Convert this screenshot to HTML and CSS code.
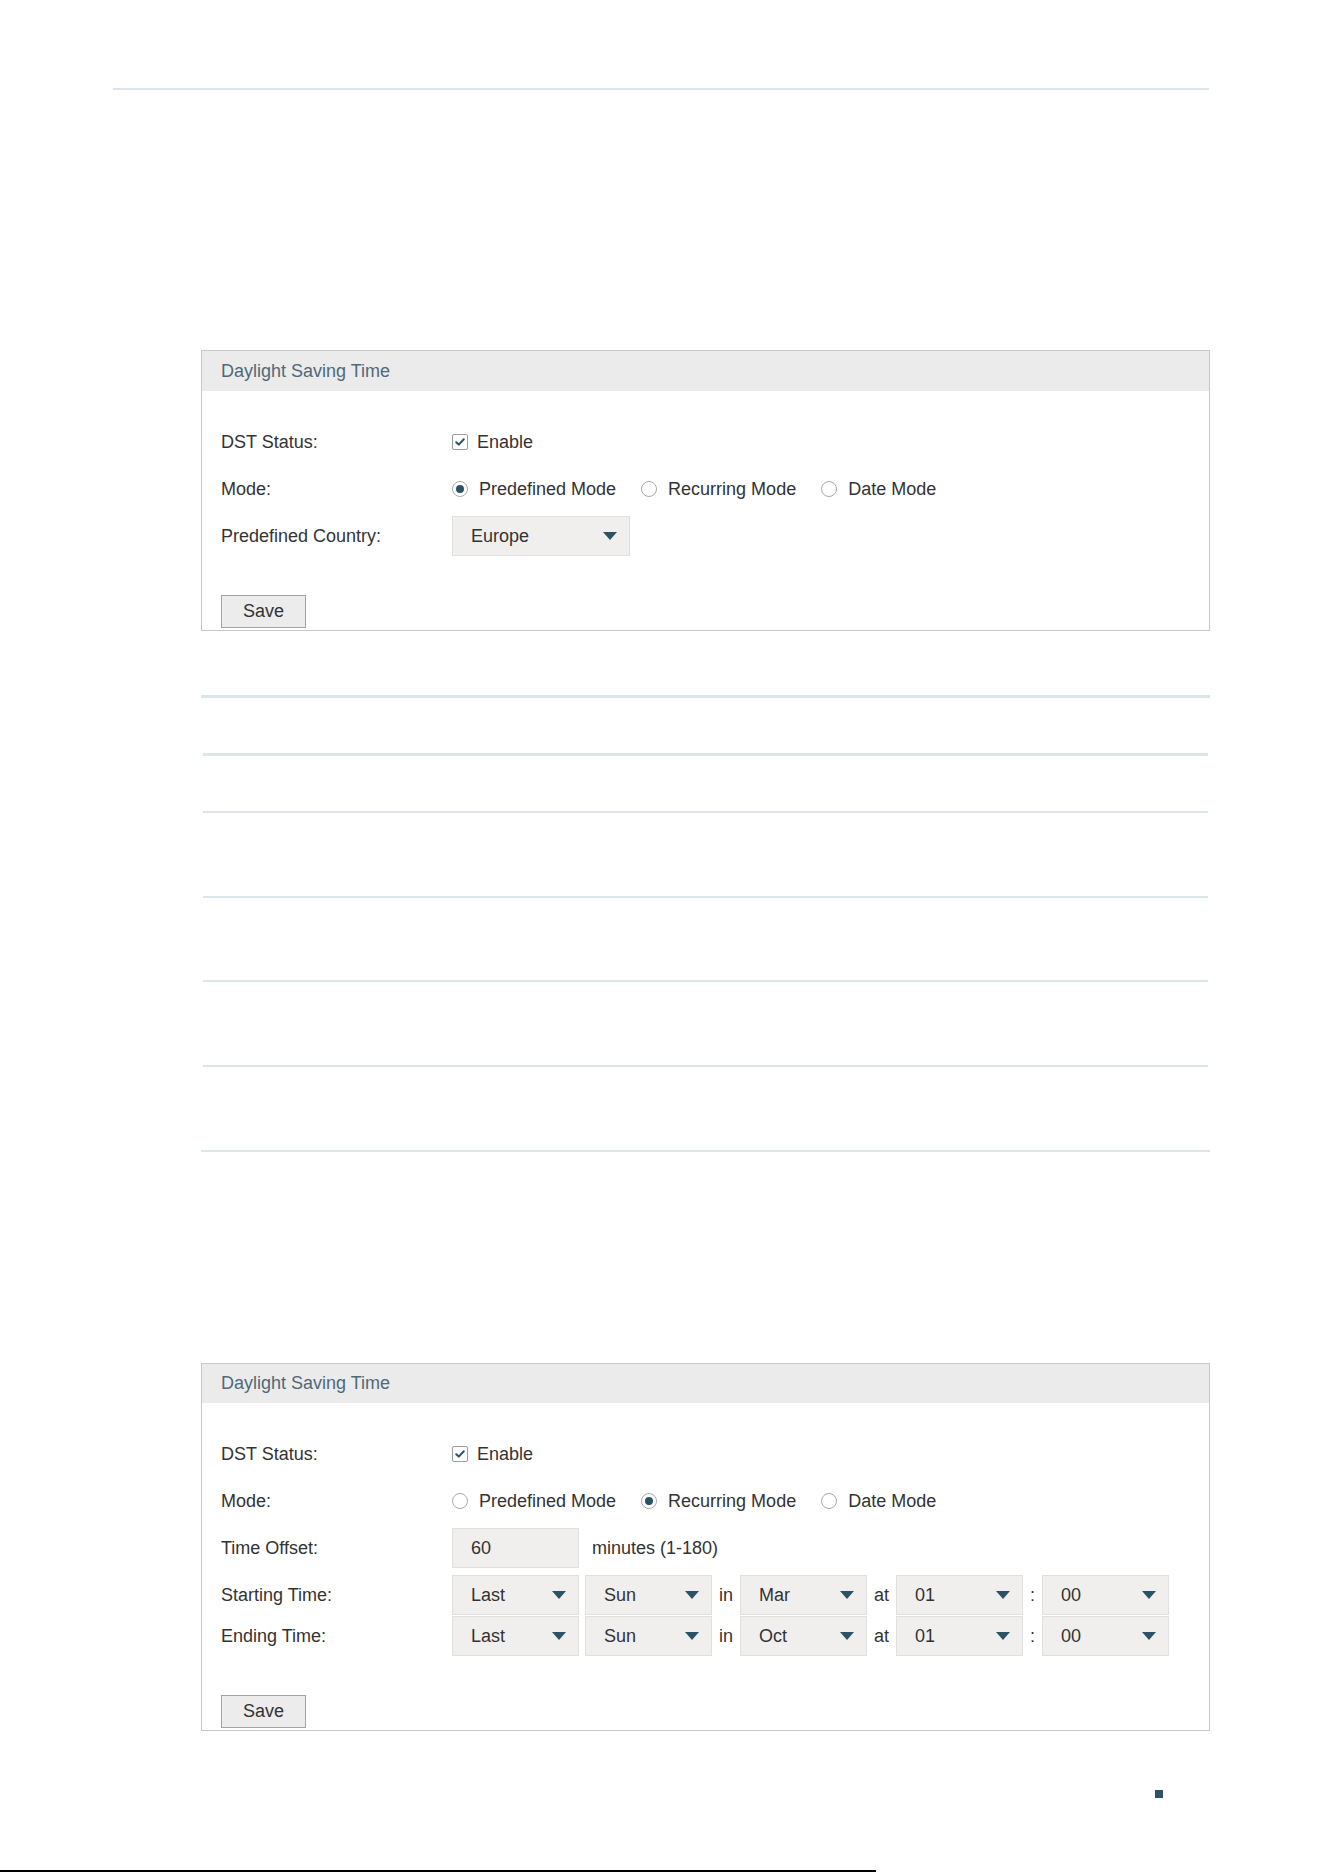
FILE: index.html
```html
<!DOCTYPE html>
<html lang="en">
<head>
  <meta charset="UTF-8">
  <meta name="viewport" content="width=device-width, initial-scale=1.0">
  <title>Daylight Saving Time</title>
  <link rel="stylesheet" href="styles.css">
</head>
<body>
  <div class="page">
    <!-- Top rule of the page -->
    <div class="top-rule"></div>

    <!-- DST panel, predefined mode -->
    <section class="panel">
      <div class="panel-head">Daylight Saving Time</div>
      <div class="panel-body">
        <div class="form-row">
          <span class="label">DST Status:</span>
          <div class="controls">
            <label class="check">
              <span class="box"><svg width="14" height="14" viewBox="0 0 14 14"><path d="M3.2 7.2 L5.8 9.6 L10.8 4.2" fill="none" stroke="#2d5266" stroke-width="2" stroke-linecap="round" stroke-linejoin="round"/></svg></span>
              Enable
            </label>
          </div>
        </div>
        <div class="form-row">
          <span class="label">Mode:</span>
          <div class="controls radios">
            <label class="radio"><span class="dot on"></span>Predefined Mode</label>
            <label class="radio"><span class="dot"></span>Recurring Mode</label>
            <label class="radio"><span class="dot"></span>Date Mode</label>
          </div>
        </div>
        <div class="form-row">
          <span class="label">Predefined Country:</span>
          <div class="controls">
            <div class="select wide"><span>Europe</span><i class="caret"></i></div>
          </div>
        </div>
        <button class="btn">Save</button>
      </div>
    </section>

    <!-- Blank settings table -->
    <div class="blank-table">
      <div class="tr short first"></div>
      <div class="tr short"></div>
      <div class="tr"></div>
      <div class="tr mid"></div>
      <div class="tr"></div>
      <div class="tr last"></div>
    </div>

    <!-- DST panel, recurring mode -->
    <section class="panel second">
      <div class="panel-head">Daylight Saving Time</div>
      <div class="panel-body">
        <div class="form-row">
          <span class="label">DST Status:</span>
          <div class="controls">
            <label class="check">
              <span class="box"><svg width="14" height="14" viewBox="0 0 14 14"><path d="M3.2 7.2 L5.8 9.6 L10.8 4.2" fill="none" stroke="#2d5266" stroke-width="2" stroke-linecap="round" stroke-linejoin="round"/></svg></span>
              Enable
            </label>
          </div>
        </div>
        <div class="form-row">
          <span class="label">Mode:</span>
          <div class="controls radios">
            <label class="radio"><span class="dot"></span>Predefined Mode</label>
            <label class="radio"><span class="dot on"></span>Recurring Mode</label>
            <label class="radio"><span class="dot"></span>Date Mode</label>
          </div>
        </div>
        <div class="form-row">
          <span class="label">Time Offset:</span>
          <div class="controls">
            <div class="field">60</div>
            <span class="hint">minutes (1-180)</span>
          </div>
        </div>
        <div class="form-row">
          <span class="label">Starting Time:</span>
          <div class="controls times">
            <div class="select"><span>Last</span><i class="caret"></i></div>
            <div class="select"><span>Sun</span><i class="caret"></i></div>
            <span class="sep">in</span>
            <div class="select"><span>Mar</span><i class="caret"></i></div>
            <span class="sep">at</span>
            <div class="select"><span>01</span><i class="caret"></i></div>
            <span class="sep">:</span>
            <div class="select"><span>00</span><i class="caret"></i></div>
          </div>
        </div>
        <div class="form-row tight">
          <span class="label">Ending Time:</span>
          <div class="controls times">
            <div class="select"><span>Last</span><i class="caret"></i></div>
            <div class="select"><span>Sun</span><i class="caret"></i></div>
            <span class="sep">in</span>
            <div class="select"><span>Oct</span><i class="caret"></i></div>
            <span class="sep">at</span>
            <div class="select"><span>01</span><i class="caret"></i></div>
            <span class="sep">:</span>
            <div class="select"><span>00</span><i class="caret"></i></div>
          </div>
        </div>
        <button class="btn">Save</button>
      </div>
    </section>

    <!-- Page footer marks -->
    <div class="page-mark"></div>
    <div class="bottom-rule"></div>
  </div>
</body>
</html>
```

FILE: styles.css
```css
:root {
  --rule: #dce6ea;
  --teal: #2d5266;
  --text: #333333;
  --title: #4f6979;
  --head-bg: #ebebeb;
  --field-bg: #f0efee;
  --field-border: #e0e0e0;
}
body {
  margin: 0;
  background: #ffffff;
  font-family: "Liberation Sans", Arial, sans-serif;
  font-size: 18px;
  color: var(--text);
}
.page {
  padding-top: 88px;
  height: 1872px;
  box-sizing: border-box;
  overflow: hidden;
}
.top-rule {
  margin-left: 113px;
  width: 1096px;
  height: 2px;
  background: var(--rule);
}
/* Panels */
.panel {
  margin: 260px 0 0 201px;
  width: 1009px;
  box-sizing: border-box;
  border: 1px solid #c8c8c8;
}
.panel.second {
  margin-top: 211px;
}
.panel-head {
  height: 40px;
  line-height: 40px;
  padding-left: 19px;
  background: var(--head-bg);
  color: var(--title);
}
.panel.second .panel-head {
  height: 39px;
  line-height: 39px;
}
.panel-body {
  padding: 31px 0 2px 19px;
}
.form-row {
  display: grid;
  grid-template-columns: 231px 1fr;
  align-items: center;
  height: 40px;
}
.form-row + .form-row {
  margin-top: 7px;
}
.form-row.tight {
  margin-top: 1px;
}
.controls {
  display: flex;
  align-items: center;
  height: 100%;
}
/* Checkbox and radios */
.check {
  display: flex;
  align-items: center;
  gap: 9px;
}
.box {
  width: 16px;
  height: 16px;
  box-sizing: border-box;
  border: 1px solid #9c9c9c;
  border-radius: 2px;
  display: flex;
  align-items: center;
  justify-content: center;
}
.radios {
  gap: 25px;
}
.radio {
  display: flex;
  align-items: center;
  gap: 11px;
}
.dot {
  width: 16px;
  height: 16px;
  box-sizing: border-box;
  border: 1px solid #aaaaaa;
  border-radius: 50%;
  display: flex;
  align-items: center;
  justify-content: center;
}
.dot.on::after {
  content: "";
  width: 8px;
  height: 8px;
  border-radius: 50%;
  background: var(--teal);
}
/* Select boxes and text field */
.select,
.field {
  height: 40px;
  width: 127px;
  box-sizing: border-box;
  background: var(--field-bg);
  border: 1px solid var(--field-border);
  padding: 0 12px 0 18px;
  display: flex;
  align-items: center;
  justify-content: space-between;
}
.select.wide {
  width: 178px;
}
.caret {
  width: 0;
  height: 0;
  border-left: 7px solid transparent;
  border-right: 7px solid transparent;
  border-top: 8px solid var(--teal);
}
.hint {
  margin-left: 13px;
}
.times {
  gap: 6px;
}
.sep {
  padding: 0 1px;
}
.btn {
  display: block;
  margin-top: 39px;
  width: 85px;
  height: 33px;
  background: #ececec;
  border: 1px solid #a3a3a3;
  font-family: inherit;
  font-size: 18px;
  color: var(--text);
  padding: 0;
}
/* Blank table under the first panel */
.blank-table {
  margin: 64px 0 0 201px;
  width: 1009px;
  border-top: 3px solid var(--rule);
  border-bottom: 2px solid var(--rule);
}
.tr {
  margin: 0 2px;
  height: 83px;
  border-bottom: 2px solid var(--rule);
}
.tr.mid {
  height: 82px;
}
.tr.short {
  height: 55px;
}
.tr.first {
  border-bottom-width: 3px;
}
.tr.last {
  border-bottom: none;
}
/* Footer marks */
.page-mark {
  margin: 59px 0 0 1155px;
  width: 8px;
  height: 8px;
  background: var(--teal);
}
.bottom-rule {
  margin-top: 72px;
  width: 876px;
  height: 2px;
  background: #000000;
}
```
